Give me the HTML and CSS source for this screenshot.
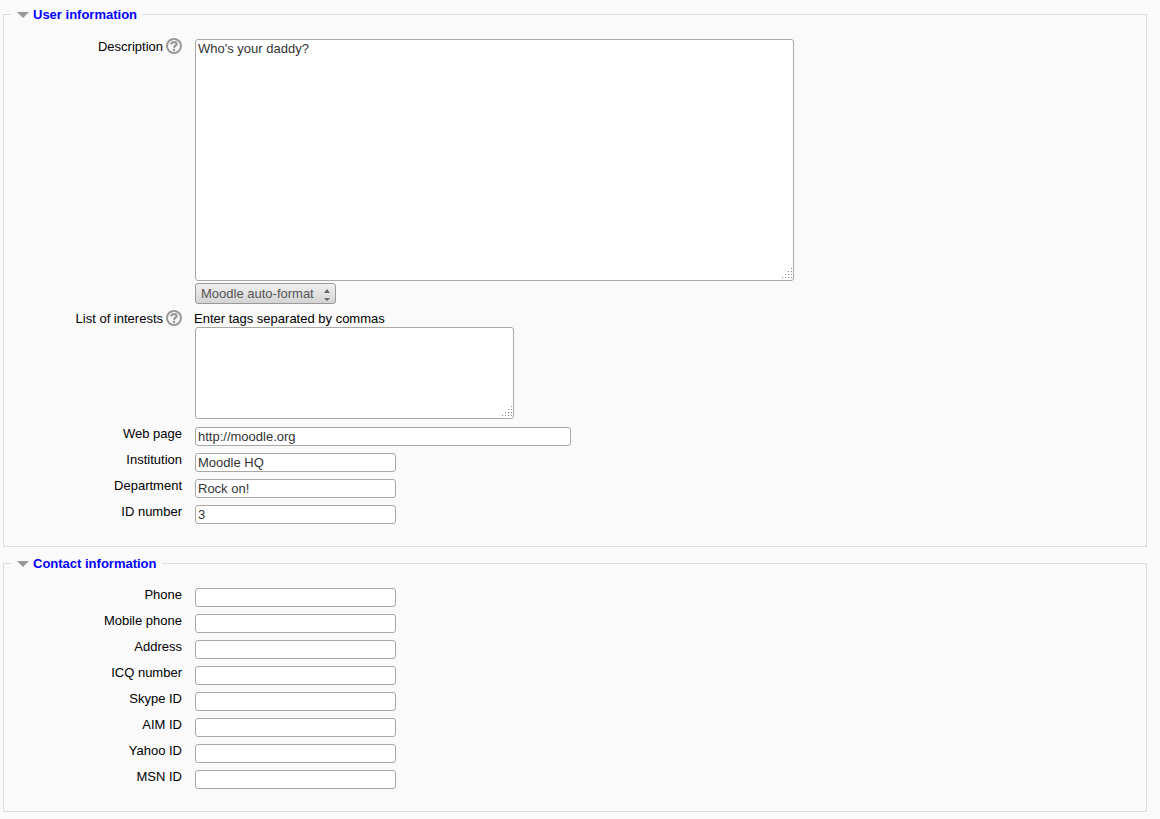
FILE: index.html
```html
<!DOCTYPE html>
<html lang="en">
<head>
  <meta charset="UTF-8" />
  <meta name="viewport" content="width=device-width, initial-scale=1.0"/>
  <title>Edit profile</title>
  <link rel="stylesheet" href="styles.css">
</head>
<body>

  <form class="profile-form">
    <fieldset>
      <legend>
        <a href="#" class="toggle">
          <svg width="12" height="12" viewBox="0 0 12 12"><path d="M0 3h12L6 9z" fill="#999"/></svg>
          User information
        </a>
      </legend>

      <div class="row">
        <div class="title">
          <label for="description">Description</label>
          <button type="button" class="help" aria-label="Help with Description">
            <svg width="16" height="16" viewBox="0 0 16 16" fill="none" stroke="#999">
              <circle cx="8" cy="8" r="7" stroke-width="2"/>
              <path d="M5.3 6.6C5.3 3.4 10.6 3.4 10.6 6C10.6 7.7 8 7.8 8 9.8M8 10.7V13" stroke-width="2.4"/>
            </svg>
          </button>
        </div>
        <div class="field">
          <textarea id="description" class="editor">Who's your daddy?</textarea>
          <div class="select-box">
            <select aria-label="Format">
              <option>Moodle auto-format</option>
              <option>HTML format</option>
              <option>Plain text format</option>
              <option>Markdown format</option>
            </select>
            <svg class="arrows" width="6" height="12" viewBox="0 0 6 12" fill="#666"><path d="M0 4L3 0L6 4zM0 9h6L3 12z"/></svg>
          </div>
        </div>
      </div>

      <div class="row">
        <div class="title">
          <label for="interests">List of interests</label>
          <button type="button" class="help" aria-label="Help with List of interests">
            <svg width="16" height="16" viewBox="0 0 16 16" fill="none" stroke="#999">
              <circle cx="8" cy="8" r="7" stroke-width="2"/>
              <path d="M5.3 6.6C5.3 3.4 10.6 3.4 10.6 6C10.6 7.7 8 7.8 8 9.8M8 10.7V13" stroke-width="2.4"/>
            </svg>
          </button>
        </div>
        <div class="field">
          <span id="tags-hint" class="hint">Enter tags separated by commas</span>
          <textarea id="interests" class="tags" aria-describedby="tags-hint"></textarea>
        </div>
      </div>

      <div class="row">
        <div class="title"><label for="url">Web page</label></div>
        <div class="field"><input type="text" id="url" class="wide" value="http://moodle.org" /></div>
      </div>
      <div class="row">
        <div class="title"><label for="institution">Institution</label></div>
        <div class="field"><input type="text" id="institution" value="Moodle HQ" /></div>
      </div>
      <div class="row">
        <div class="title"><label for="department">Department</label></div>
        <div class="field"><input type="text" id="department" value="Rock on!" /></div>
      </div>
      <div class="row">
        <div class="title"><label for="idnumber">ID number</label></div>
        <div class="field"><input type="text" id="idnumber" value="3" /></div>
      </div>
    </fieldset>

    <fieldset>
      <legend>
        <a href="#" class="toggle">
          <svg width="12" height="12" viewBox="0 0 12 12"><path d="M0 3h12L6 9z" fill="#999"/></svg>
          Contact information
        </a>
      </legend>

      <div class="row">
        <div class="title"><label for="phone1">Phone</label></div>
        <div class="field"><input type="text" id="phone1" /></div>
      </div>
      <div class="row">
        <div class="title"><label for="phone2">Mobile phone</label></div>
        <div class="field"><input type="text" id="phone2" /></div>
      </div>
      <div class="row">
        <div class="title"><label for="address">Address</label></div>
        <div class="field"><input type="text" id="address" /></div>
      </div>
      <div class="row">
        <div class="title"><label for="icq">ICQ number</label></div>
        <div class="field"><input type="text" id="icq" /></div>
      </div>
      <div class="row">
        <div class="title"><label for="skype">Skype ID</label></div>
        <div class="field"><input type="text" id="skype" /></div>
      </div>
      <div class="row">
        <div class="title"><label for="aim">AIM ID</label></div>
        <div class="field"><input type="text" id="aim" /></div>
      </div>
      <div class="row">
        <div class="title"><label for="yahoo">Yahoo ID</label></div>
        <div class="field"><input type="text" id="yahoo" /></div>
      </div>
      <div class="row">
        <div class="title"><label for="msn">MSN ID</label></div>
        <div class="field"><input type="text" id="msn" /></div>
      </div>
    </fieldset>
  </form>

</body>
</html>
```

FILE: styles.css
```css
* {
  box-sizing: border-box;
}
body {
  margin: 0;
  background: #fafafa;
  color: #000;
  font: 13px/16px "Liberation Sans", Arial, sans-serif;
}
.profile-form {
  display: flex;
  flex-direction: column;
  gap: 7px;
  padding: 5px 13px 7px 3px;
}
fieldset {
  min-width: 0;
  margin: 0;
  padding: 15px 7px 21px;
  border: 1px solid #ddd;
}
legend {
  padding: 2px 5px 0 6px;
}
.toggle {
  display: flex;
  align-items: center;
  gap: 4px;
  color: #00f;
  font-weight: bold;
  text-decoration: none;
}
.row {
  display: grid;
  grid-template-columns: 171px 1fr;
  column-gap: 12px;
}
.row + .row {
  margin-top: 5px;
}
.title {
  display: flex;
  justify-content: flex-end;
  align-items: flex-start;
  gap: 3px;
}
.title:has(.help), .hint {
  line-height: 18px;
}
.help {
  display: block;
  padding: 0;
  border: 0;
  background: none;
  cursor: pointer;
}
.help svg {
  display: block;
}
.field {
  display: flex;
  flex-direction: column;
  align-items: flex-start;
  min-width: 0;
}
input, textarea, select {
  max-width: 100%;
  border: 1px solid #aaa8a4;
  border-radius: 3px;
  background: #fff;
  color: #333;
  font: inherit;
}
input {
  width: 201px;
  height: 19px;
  margin: 1px;
  padding: 0 2px;
}
input.wide {
  width: 376px;
}
textarea {
  display: block;
  margin: 1px 1px 2px;
  padding: 1px 2px;
}
textarea::-webkit-resizer {
  background: url("data:image/svg+xml,%3Csvg xmlns='http://www.w3.org/2000/svg' width='12' height='12'%3E%3Cpath fill='%23888' d='M10 0h1v1h-1zM7 3h1v1H7zM10 3h1v1h-1zM4 6h1v1H4zM7 6h1v1H7zM10 6h1v1h-1zM1 9h1v1H1zM4 9h1v1H4zM7 9h1v1H7zM10 9h1v1h-1z'/%3E%3C/svg%3E") no-repeat right bottom;
}
.editor {
  width: 599px;
  height: 242px;
}
.tags {
  width: 319px;
  height: 92px;
  margin-top: -1px;
}
.select-box {
  position: relative;
  margin: 0 1px 1px;
}
select {
  display: block;
  appearance: none;
  width: 141px;
  height: 21px;
  padding: 0 20px 0 5px;
  border-color: #999;
  background: linear-gradient(#f0f0f0, #d4d4d4);
  color: #555;
}
.arrows {
  position: absolute;
  right: 6px;
  top: 6px;
  pointer-events: none;
}
```
